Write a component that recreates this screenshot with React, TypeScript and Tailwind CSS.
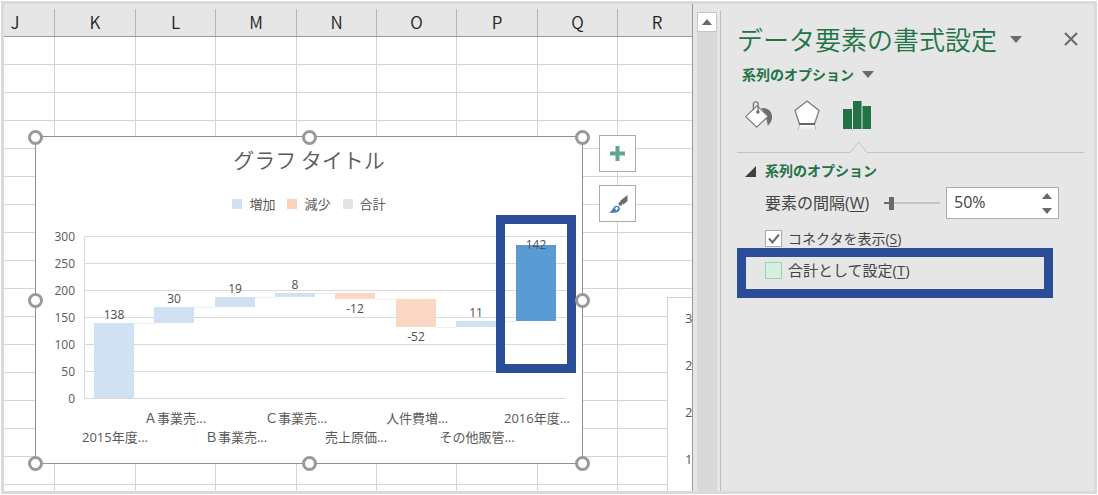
import { useState } from "react";

type Step = {
  label: string;
  value: number;
  from: number;
  to: number;
  color: string;
};

const columns = [
  { name: "J", width: "w-[51px]" },
  { name: "K", width: "w-[81px]" },
  { name: "L", width: "w-[80px]" },
  { name: "M", width: "w-[81px]" },
  { name: "N", width: "w-[80px]" },
  { name: "O", width: "w-[80px]" },
  { name: "P", width: "w-[81px]" },
  { name: "Q", width: "w-[80px]" },
  { name: "R", width: "" },
];

const rows = Array.from({ length: 16 }, (_, i) => i);

const steps: Step[] = [
  { label: "2015年度...", value: 138, from: 0, to: 138, color: "#cfe1f2" },
  { label: "Ａ事業売...", value: 30, from: 138, to: 168, color: "#cfe1f2" },
  { label: "Ｂ事業売...", value: 19, from: 168, to: 187, color: "#cfe1f2" },
  { label: "Ｃ事業売...", value: 8, from: 187, to: 195, color: "#cfe1f2" },
  { label: "売上原価...", value: -12, from: 195, to: 183, color: "#fbd8c3" },
  { label: "人件費増...", value: -52, from: 183, to: 131, color: "#fbd8c3" },
  { label: "その他販管...", value: 11, from: 131, to: 142, color: "#cfe1f2" },
  { label: "2016年度...", value: 142, from: 142, to: 284, color: "#5b9bd5" },
];

const legend = [
  { name: "増加", color: "bg-[#cfe1f2]" },
  { name: "減少", color: "bg-[#fbd3bb]" },
  { name: "合計", color: "bg-[#e4e4e4]" },
];

const ticks = [0, 50, 100, 150, 200, 250, 300];

const handles = [
  "-left-[8px] -top-[7px]",
  "left-1/2 -ml-[7px] -top-[7px]",
  "-right-[8px] -top-[7px]",
  "-left-[8px] top-1/2 -mt-[7px]",
  "-right-[8px] top-1/2 -mt-[7px]",
  "-left-[8px] -bottom-[8px]",
  "left-1/2 -ml-[7px] -bottom-[8px]",
  "-right-[8px] -bottom-[8px]",
];

// value -> y inside the plot drawing
const toY = (value: number) => Math.round(174 - value * 0.54);
const barX = (index: number) => Math.round(58 + index * 60.3);

function Waterfall() {
  return (
    <svg
      viewBox="0 0 546 239"
      className="block h-[239px] w-full font-['Open_Sans','Noto_Sans_CJK_JP',sans-serif]"
    >
      {ticks.map((tick) => (
        <g key={tick}>
          <rect x="48" y={toY(tick)} width="482" height="1" fill="#d9d9d9" />
          <text x="39" y={toY(tick) + 5} textAnchor="end" fontSize="12" fill="#595959">
            {tick}
          </text>
        </g>
      ))}
      <rect x="48" y="12" width="1" height="162" fill="#d9d9d9" />
      {steps.map((step, i) => {
        const x = barX(i);
        const top = toY(Math.max(step.from, step.to));
        const bottom = toY(Math.min(step.from, step.to));
        return (
          <g key={step.label}>
            {i < steps.length - 1 && (
              <rect x={x + 40} y={toY(step.to)} width="21" height="1" fill="#efefef" />
            )}
            <rect x={x} y={top} width="40" height={bottom - top} fill={step.color} />
            <text
              x={x + 20}
              y={i === 7 ? top + 4 : step.value < 0 ? bottom + 14 : top - 4}
              textAnchor="middle"
              fontSize="12"
              fill="#505050"
            >
              {step.value}
            </text>
            <text
              x={x + 21}
              y={i % 2 === 0 ? 218 : 199}
              textAnchor="middle"
              fontSize="13"
              fill="#595959"
            >
              {step.label}
            </text>
          </g>
        );
      })}
    </svg>
  );
}

function Chart() {
  return (
    <div className="absolute left-[31px] top-[132px] w-[548px] border border-[#8f8f8f] bg-white text-[#595959]">
      <h2 className="pt-[6px] text-center text-[21px] font-[350] leading-8">グラフ タイトル</h2>
      <ul className="mt-[17px] flex h-6 items-center justify-center gap-3 text-[13px]">
        {legend.map((item) => (
          <li key={item.name} className="flex items-center gap-[7px]">
            <span className={`h-[10px] w-[10px] ${item.color}`} />
            {item.name}
          </li>
        ))}
      </ul>
      <div className="pt-2">
        <Waterfall />
      </div>
      <div className="absolute left-[460px] top-[78px] h-[158px] w-[80px] border-[9px] border-[#2b4c96]" />
      {handles.map((place) => (
        <span
          key={place}
          className={`absolute h-[15px] w-[15px] rounded-full border-[3px] border-[#999] bg-white ${place}`}
        />
      ))}
    </div>
  );
}

function ChartButtons() {
  return (
    <div className="absolute left-[595px] top-[131px] flex flex-col gap-[13px]">
      <button
        aria-label="グラフ要素"
        className="flex h-[37px] w-[37px] items-center justify-center border border-[#ababab] bg-white"
      >
        <svg viewBox="0 0 15 15" className="h-[15px] w-[15px]" fill="#62a58c">
          <path d="M5.500 0h4v5.500H15v4H9.500V15h-4V9.500H0v-4h5.500z" />
        </svg>
      </button>
      <button
        aria-label="グラフ スタイル"
        className="flex h-[37px] w-[37px] items-center justify-center border border-[#ababab] bg-white"
      >
        <svg viewBox="0 0 20 20" className="h-5 w-5">
          <path d="M19.500 1v6l-4 3.500-3.500-3.500z" fill="#6b6b6b" />
          <circle cx="12.500" cy="9.800" r="2" fill="#6b6b6b" />
          <path
            d="M.5 18.500c3-.5 4-3.500 5.500-5.500 1.300-1.700 4-1.700 5.200-.3 1.200 1.500.7 3.800-1.200 5-2 1.200-6 1.200-9.500.8z"
            fill="#3f78b5"
          />
          <path d="M6.800 14.300c1-1.600 2.600-1.500 3.300-.6-.2 1.300-.8 2.300-2.200 3 .2-1-.2-2-1.100-2.400z" fill="#fff" />
        </svg>
      </button>
    </div>
  );
}

function Sheet() {
  return (
    <main className="relative min-w-0 flex-1 overflow-hidden border-r border-[#999] bg-white">
      <table className="w-full table-fixed border-separate border-spacing-0">
        <thead>
          <tr>
            {columns.map((col) => (
              <th
                key={col.name}
                className={`h-[33px] border-b border-[#999] bg-[#e6e6e6] p-0 align-bottom text-[17px] font-[350] text-[#222] ${col.width}`}
              >
                <div
                  className={`flex h-[27px] items-center justify-center pb-[2px] ${
                    col.name === "R" ? "pl-1" : "border-r border-[#b4b4b4]"
                  } ${col.name === "J" ? "pr-7" : ""}`}
                >
                  {col.name}
                </div>
              </th>
            ))}
          </tr>
        </thead>
        <tbody>
          {rows.map((row) => (
            <tr key={row}>
              {columns.map((col) => (
                <td
                  key={col.name}
                  className="h-7 border-b border-r border-[#d4d4d4] p-0 last:border-r-0"
                />
              ))}
            </tr>
          ))}
          <tr>
            {columns.map((col) => (
              <td key={col.name} className="h-[6px] border-r border-[#d4d4d4] p-0 last:border-r-0" />
            ))}
          </tr>
        </tbody>
      </table>

      {/* second chart, running under the edge of the sheet */}
      <div className="absolute bottom-0 left-[663px] right-0 top-[293px] flex flex-col gap-[23px] border-l border-t border-[#d0d0d0] bg-white pl-[17px] pt-2 font-['Open_Sans',sans-serif] text-[13px] leading-6 text-[#595959]">
        <span>3</span>
        <span>2</span>
        <span>2</span>
        <span>1</span>
      </div>
      <Chart />
      <ChartButtons />
    </main>
  );
}

function Scrollbar() {
  return (
    <div className="flex w-[27px] shrink-0 flex-col pl-1 pr-[3px] pt-2">
      <button
        aria-label="上へスクロール"
        className="flex h-5 w-5 items-center justify-center border border-[#c6c6c6] bg-white"
      >
        <svg viewBox="0 0 10 6" className="h-[6px] w-[10px]" fill="#6a6a6a">
          <path d="M5 0l5 6H0z" />
        </svg>
      </button>
      <div className="w-5 flex-1 bg-[#d9d9d9]" />
    </div>
  );
}

function Caret() {
  return (
    <svg viewBox="0 0 12 7" className="h-[7px] w-3" fill="#6a6a6a">
      <path d="M0 0h12L6 7z" />
    </svg>
  );
}

function FormatPane() {
  const [gap, setGap] = useState(50);
  const [connector, setConnector] = useState(true);
  const [total, setTotal] = useState(false);

  return (
    <aside className="mt-[7px] w-[374px] shrink-0 border-l border-[#bdbdbd] pl-4 pr-[10px] text-[#444]">
      <div className="flex items-center pt-2">
        <h1 className="text-[26px] font-[350] leading-10 text-[#217346]">データ要素の書式設定</h1>
        <button aria-label="作業ウィンドウのオプション" className="ml-[13px]">
          <Caret />
        </button>
        <button aria-label="閉じる" className="ml-auto mr-[6px]">
          <svg viewBox="0 0 14 14" className="h-[14px] w-[14px]" stroke="#6a6a6a" strokeWidth="2">
            <path d="M1 1l12 12M13 1L1 13" />
          </svg>
        </button>
      </div>

      <button className="mt-[3px] flex items-center gap-2 pl-[5px] text-[14px] font-bold leading-6 text-[#217346]">
        系列のオプション
        <Caret />
      </button>

      <div className="mt-[14px] flex h-8 items-start gap-5 pl-2">
        <button aria-label="塗りつぶしと線">
          <svg viewBox="0 0 30 30" className="h-[30px] w-[29px]">
            <path d="M17 8c6-1 11 3 11 9 0 4-2 7-4.500 9-.8-5-1.200-10-6.500-18z" fill="#6f6f6f" />
            <path d="M12.500 5.500L24 16.500 12 27.500.8 16.500z" fill="#fff" stroke="#787878" strokeWidth="1.200" />
            <path d="M8.700 10V3.500c0-2.700 4.800-2.700 4.800 0V12" fill="none" stroke="#787878" strokeWidth="1.400" />
            <circle cx="13.300" cy="12" r="1.800" fill="#6a6a6a" />
          </svg>
        </button>
        <button aria-label="効果">
          <svg viewBox="0 0 28 31" className="h-[31px] w-[28px]">
            <defs>
              <linearGradient id="reflection" x1="0" y1="0" x2="0" y2="1">
                <stop offset="0" stopColor="#fff" />
                <stop offset="1" stopColor="#e6e6e6" />
              </linearGradient>
            </defs>
            <path d="M5.500 24h15l1.500 6H4z" fill="url(#reflection)" />
            <path d="M5.500 25L4 30M20.500 25l1.500 5" stroke="#bbb" />
            <path d="M13 1l12 9.500L20.500 24h-15L1 10.500z" fill="#fff" stroke="#7d7d7d" strokeWidth="1.300" />
            <path d="M5 24h16" stroke="#666" strokeWidth="2" />
          </svg>
        </button>
        <button aria-label="系列のオプション" className="ml-[1px]">
          <svg viewBox="0 0 28 29" className="h-[29px] w-[28px]" fill="#217346">
            <path d="M0 9h9v20H0zM10 1h8.500v28H10zM19.500 6H28v23h-8.500z" />
          </svg>
        </button>
      </div>

      {/* divider with a notch under the active tab */}
      <div className="mt-[9px] flex h-3 items-end">
        <div className="w-[113px] border-b border-[#c3c3c3]" />
        <svg viewBox="0 0 17 12" className="h-3 w-[17px]" fill="none" stroke="#c3c3c3">
          <path d="M0 11.500L8.500 1 17 11.500" />
        </svg>
        <div className="flex-1 border-b border-[#c3c3c3]" />
      </div>

      <section className="pl-7 font-['Open_Sans','Noto_Sans_CJK_JP',sans-serif]">
        <button className="-ml-5 mt-[6px] flex items-center gap-[9px] text-[14px] font-bold leading-6 text-[#217346]">
          <svg viewBox="0 0 11 11" className="h-[11px] w-[11px]" fill="#404040">
            <path d="M11 0v11H0z" />
          </svg>
          系列のオプション
        </button>

        <div className="mt-1 flex h-8 items-center">
          <label htmlFor="gap" className="w-[119px] whitespace-nowrap text-[16px] leading-6">
            要素の間隔(<span className="underline underline-offset-2">W</span>)
          </label>
          <input
            id="gap"
            type="range"
            min={0}
            max={500}
            value={gap}
            onChange={(e) => setGap(Number(e.target.value))}
            className="h-4 w-14 appearance-none bg-[linear-gradient(to_right,#6a6a6a_5px,#c3c3c3_5px)] bg-[length:100%_2px] bg-center bg-no-repeat [&::-webkit-slider-thumb]:h-[13px] [&::-webkit-slider-thumb]:w-[5px] [&::-webkit-slider-thumb]:appearance-none [&::-webkit-slider-thumb]:bg-[#6a6a6a]"
          />
          <div className="ml-[6px] flex h-8 w-[113px] border border-[#ababab] bg-white">
            <input
              type="text"
              aria-label="要素の間隔"
              value={`${gap}%`}
              onChange={(e) => setGap(parseInt(e.target.value) || 0)}
              className="w-[88px] pb-[2px] pl-[7px] text-[16px] outline-none"
            />
            <div className="flex flex-1 flex-col items-center justify-center gap-[9px]">
              <button aria-label="増やす" onClick={() => setGap(gap + 1)}>
                <svg viewBox="0 0 10 6" className="h-[6px] w-[10px]" fill="#6a6a6a">
                  <path d="M5 0l5 6H0z" />
                </svg>
              </button>
              <button aria-label="減らす" onClick={() => setGap(Math.max(0, gap - 1))}>
                <svg viewBox="0 0 10 6" className="h-[6px] w-[10px]" fill="#6a6a6a">
                  <path d="M0 0h10L5 6z" />
                </svg>
              </button>
            </div>
          </div>
        </div>

        <label className="mt-[7px] flex h-6 items-center gap-[6px] text-[14px]">
          <span className="relative h-[17px] w-[17px]">
            <input
              type="checkbox"
              checked={connector}
              onChange={(e) => setConnector(e.target.checked)}
              className="peer block h-[17px] w-[17px] appearance-none border border-[#ababab] bg-white"
            />
            <svg
              viewBox="0 0 17 17"
              className="pointer-events-none absolute inset-0 hidden peer-checked:block"
              fill="none"
              stroke="#6a6a6a"
              strokeWidth="2"
            >
              <path d="M4 8.500L7.500 12.500 14 4.500" />
            </svg>
          </span>
          <span>
            コネクタを表示(<span className="underline underline-offset-2">S</span>)
          </span>
        </label>

        {/* highlighted option */}
        <div className="relative z-10 -ml-7 -mt-[2px] h-[50px] w-[316px] border-[9px] border-[#2b4c96] pl-[19px]">
          <label className="flex h-[26px] items-center gap-[6px] text-[15px]">
            <input
              type="checkbox"
              checked={total}
              onChange={(e) => setTotal(e.target.checked)}
              className="h-[17px] w-[17px] appearance-none border border-[#9fcdb3] bg-[#d3f0e0]"
            />
            <span>
              合計として設定(<span className="underline underline-offset-2">T</span>)
            </span>
          </label>
        </div>
      </section>
    </aside>
  );
}

export default function App() {
  return (
    <div className="bg-white p-px font-['Noto_Sans_CJK_JP',sans-serif]">
      <div className="flex border-[3px] border-[#d9dad9] bg-[#e6e6e6]">
        <Sheet />
        <Scrollbar />
        <FormatPane />
      </div>
    </div>
  );
}
